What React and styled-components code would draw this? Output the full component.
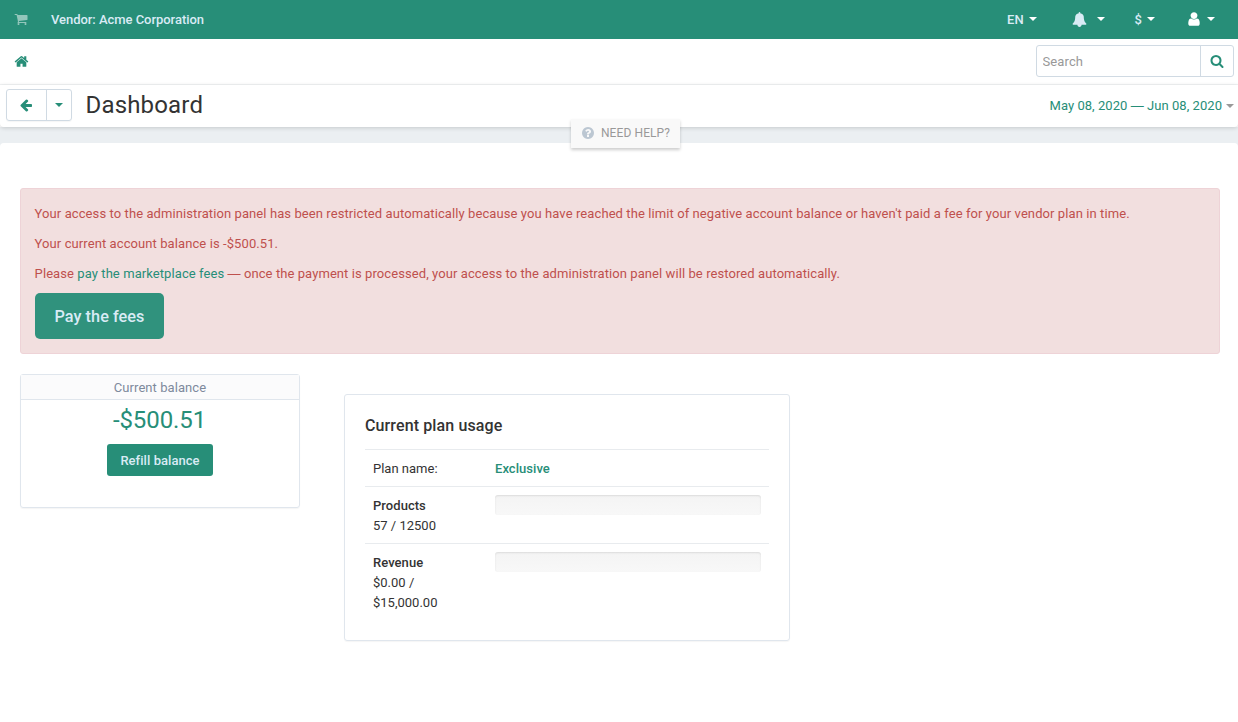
import React from 'react';
import styled, { createGlobalStyle } from 'styled-components';

const green = '#278e78';

const GlobalStyle = createGlobalStyle`
  *, *::before, *::after { box-sizing: border-box; }
  body {
    margin: 0;
    background: #fff;
    color: #333;
    font: 13px/20px Roboto, "Liberation Sans", sans-serif;
    overflow: hidden;
  }
  h1, h4, p { margin: 0; }
  a { color: ${green}; text-decoration: none; }
  button, input { font: inherit; letter-spacing: inherit; }
`;

const paths = {
  cart: 'M704 1536q0 52-38 90t-90 38-90-38-38-90 38-90 90-38 90 38 38 90zm896 0q0 52-38 90t-90 38-90-38-38-90 38-90 90-38 90 38 38 90zm128-1088v512q0 24-16.5 42.5t-40.5 21.5l-1044 122q13 60 13 70 0 16-24 64h920q26 0 45 19t19 45-19 45-45 19h-1024q-26 0-45-19t-19-45q0-11 8-31.5t16-36 21.5-40 15.5-29.5l-177-823h-204q-26 0-45-19t-19-45 19-45 45-19h256q16 0 28.5 6.5t19.5 15.5 13 24.5 8 26 5.5 29.5 4.5 26h1201q26 0 45 19t19 45z',
  bell: 'M1728 1408q0 52-38 90t-90 38h-448q0 106-75 181t-181 75-181-75-75-181h-448q-52 0-90-38t-38-90q50-42 91-88t85-119.5 74.5-158.5 50-206 19.5-260q0-152 117-282.5t307-158.5q-8-19-8-39 0-40 28-68t68-28 68 28 28 68q0 20-8 39 190 28 307 158.5t117 282.5q0 139 19.5 260t50 206 74.5 158.5 85 119.5 91 88z',
  user: 'M1536 1399q0 109-62.5 187t-150.5 78h-854q-88 0-150.5-78t-62.5-187q0-85 8.5-160.5t31.5-152 58.5-131 94-89 134.5-34.5q131 128 313 128t313-128q76 0 134.5 34.5t94 89 58.5 131 31.5 152 8.5 160.5zm-256-887q0 159-112.5 271.5t-271.5 112.5-271.5-112.5-112.5-271.5 112.5-271.5 271.5-112.5 271.5 112.5 112.5 271.5z',
  home: 'M1472 992v480q0 26-19 45t-45 19h-384v-384h-256v384h-384q-26 0-45-19t-19-45v-480q0-1 .5-3t.5-3l575-474 575 474q1 2 1 6zm223-69l-62 74q-8 9-21 11h-3q-13 0-21-7l-692-577-692 577q-12 8-24 7-13-2-21-11l-62-74q-8-10-7-23.5t11-21.5l719-599q32-26 76-26t76 26l244 204v-195q0-14 9-23t23-9h192q14 0 23 9t9 23v408l219 182q10 8 11 21.5t-7 23.5z',
  search: 'M1216 832q0-185-131.5-316.5t-316.5-131.5-316.5 131.5-131.5 316.5 131.5 316.5 316.5 131.5 316.5-131.5 131.5-316.5zm512 832q0 52-38 90t-90 38q-54 0-90-38l-343-342q-179 124-399 124-143 0-273.5-55.5t-225-150-150-225-55.5-273.5 55.5-273.5 150-225 225-150 273.5-55.5 273.5 55.5 225 150 150 225 55.5 273.5q0 220-124 399l343 343q37 37 37 90z',
  back: 'M1664 896v128q0 53-32.5 90.5t-84.5 37.5h-704l293 294q38 36 38 90t-38 90l-75 76q-37 37-90 37-52 0-91-37l-651-652q-37-37-37-90 0-52 37-91l651-650q38-38 91-38 52 0 90 38l75 74q38 38 38 91t-38 91l-293 293h704q52 0 84.5 37.5t32.5 90.5z',
  help: 'M1024 1376v-192q0-14-9-23t-23-9h-192q-14 0-23 9t-9 23v192q0 14 9 23t23 9h192q14 0 23-9t9-23zm256-672q0-88-55.5-163t-138.5-116-170-41q-243 0-371 213-15 24 8 42l132 100q7 6 19 6 16 0 25-12 53-68 86-92 34-24 86-24 48 0 85.5 26t37.5 59q0 38-20 61t-68 45q-63 28-115.5 86.5t-52.5 125.5v36q0 14 9 23t23 9h192q14 0 23-9t9-23q0-19 21.5-49.5t54.5-49.5q32-18 49-28.5t46-35 44.5-48 28-60.5 12.5-81zm384 192q0 209-103 385.5t-279.5 279.5-385.5 103-385.5-103-279.5-279.5-103-385.5 103-385.5 279.5-279.5 385.5-103 385.5 103 279.5 279.5 103 385.5z',
};

const Glyph = styled.svg`
  display: block;
  flex: none;
  width: ${(p) => p.$size}px;
  height: ${(p) => p.$size}px;
  fill: currentColor;
`;

const Icon = ({ name, size = 14 }) => (
  <Glyph $size={size} viewBox="0 0 1792 1792" aria-hidden="true">
    <path d={paths[name]} />
  </Glyph>
);

const Caret = styled.span`
  flex: none;
  border: 4px solid transparent;
  border-top-color: ${(p) => p.$color || green};
  border-bottom: 0;
`;

const Dash = styled.span`
  font-family: "Liberation Sans", sans-serif;
  line-height: 1;
`;

const TopBar = styled.header`
  display: flex;
  align-items: center;
  height: 39px;
  padding: 0 23px 0 14px;
  background: ${green};
  color: #d9ebf5;
  font-weight: 500;
`;

const CartLink = styled.span`
  color: #93c6bb;
  margin: 0 23px 1px 0;
`;

const Vendor = styled.span`
  letter-spacing: -0.04px;
`;

const TopMenu = styled.nav`
  display: flex;
  align-items: center;
  margin-left: auto;
`;

const TopItem = styled.span`
  display: flex;
  align-items: center;
  height: 20px;
  gap: ${(p) => p.$gap || 5}px;
  margin-left: ${(p) => p.$left || 0}px;
  color: ${(p) => p.$color || 'inherit'};
  svg, ${Caret} { margin-bottom: 1px; }
`;

const SearchRow = styled.div`
  display: flex;
  align-items: center;
  justify-content: space-between;
  height: 46px;
  padding: 0 4px 1px 14px;
  border-bottom: 1px solid #f2f4f5;
  color: ${green};
`;

const SearchForm = styled.form`
  display: flex;
  width: 198px;
  height: 32px;
  border: 1px solid #d0dae3;
  border-radius: 3px;
`;

const SearchInput = styled.input`
  flex: 1;
  min-width: 0;
  padding: 1px 6px 0 5.5px;
  border: 0;
  background: none;
  outline: 0;
  letter-spacing: 0.12px;
  &::placeholder { color: #999; opacity: 1; }
`;

const SearchButton = styled.button`
  display: flex;
  align-items: center;
  justify-content: center;
  width: 33px;
  padding: 0;
  border: 0;
  border-left: 1px solid #d0dae3;
  background: none;
  color: ${green};
`;

const TitleRow = styled.div`
  position: relative;
  z-index: 1;
  display: flex;
  align-items: center;
  height: 42px;
  padding: 0 4px 2px 6px;
  background: #fff;
  border-radius: 0 0 4px 4px;
  box-shadow: 0 1px 4px rgba(0, 0, 0, 0.16);
`;

const BackGroup = styled.div`
  display: flex;
  width: 66px;
  height: 32px;
  border: 1px solid #d0dae3;
  border-radius: 3px;
  box-shadow: 0 1px 1px rgba(0, 0, 0, 0.04);
`;

const BackButton = styled.button`
  display: flex;
  align-items: center;
  justify-content: center;
  width: ${(p) => p.$width}px;
  padding: 0 ${(p) => p.$nudge || 0}px 0 0;
  border: 0;
  background: none;
  color: ${green};
  & + & { border-left: 1px solid #d0dae3; }
`;

const Title = styled.h1`
  margin-left: 13.5px;
  font-size: 24px;
  line-height: 32px;
  font-weight: 400;
  letter-spacing: 0.17px;
`;

const DateRange = styled.a`
  display: flex;
  align-items: center;
  gap: 4px;
  margin-left: auto;
  padding-top: 2px;
  letter-spacing: 0.05px;
`;

const HelpTab = styled.a`
  position: absolute;
  top: 34px;
  left: 571px;
  display: flex;
  align-items: center;
  justify-content: center;
  gap: 6px;
  width: 109px;
  height: 29px;
  padding-bottom: 1px;
  background: #f9f9f9;
  color: #999;
  font-size: 12px;
  letter-spacing: 0.1px;
  box-shadow: 0 2px 3px rgba(0, 0, 0, 0.2);
  svg { color: #bcc7d2; margin-bottom: 1px; }
`;

const Backdrop = styled.div`
  padding-top: 16px;
  background: #ebeff2;
`;

const Content = styled.main`
  min-height: 579px;
  padding: 45px 18px 0 20px;
  background: #fff;
  border-radius: 4px 4px 0 0;
`;

const Alert = styled.section`
  height: 166px;
  padding: 15px 14px;
  background: #f2dfdf;
  border: 1px solid #eed3d7;
  border-radius: 3px;
  color: #bf504d;
  p {
    margin: 0 0 10px -0.4px;
    letter-spacing: 0.09px;
  }
  p:last-of-type {
    margin-bottom: 9px;
    letter-spacing: 0.08px;
  }
`;

const PrimaryButton = styled.button`
  display: block;
  width: ${(p) => (p.$large ? 129 : 106)}px;
  height: ${(p) => (p.$large ? 46 : 32)}px;
  padding: 1px 0 0;
  border: 0;
  border-radius: ${(p) => (p.$large ? 5 : 3)}px;
  background: ${(p) => (p.$large ? '#30927d' : green)};
  color: #d9ebf5;
  font-size: ${(p) => (p.$large ? 16.25 : 13)}px;
  font-weight: 500;
  letter-spacing: 0.05px;
`;

const Panels = styled.div`
  display: flex;
  align-items: flex-start;
  gap: 44px;
  margin-top: 20px;
`;

const Card = styled.section`
  border: 1px solid #e0e6ed;
  border-radius: 3px;
  box-shadow: 0 1px 1px rgba(0, 0, 0, 0.04);
`;

const BalanceCard = styled(Card)`
  display: flex;
  flex-direction: column;
  align-items: center;
  width: 280px;
  height: 134px;
`;

const CardHeader = styled.div`
  width: 100%;
  height: 25px;
  line-height: 25px;
  text-align: center;
  letter-spacing: 0.07px;
  background: #fbfbfc;
  border-bottom: 1px solid #e0e6ed;
  color: #7e8a9c;
`;

const Amount = styled.div`
  margin: 5px 1px 9px 0;
  line-height: 30px;
  font-size: 24px;
  letter-spacing: -0.1px;
  color: ${green};
`;

const PlanCard = styled(Card)`
  width: 446px;
  height: 247px;
  margin-top: 20px;
  padding: 20px;
`;

const PlanTitle = styled.h4`
  height: 34px;
  padding-top: 1px;
  font-size: 16px;
  line-height: 20px;
  font-weight: 500;
  letter-spacing: 0.12px;
`;

const PlanRow = styled.div`
  display: grid;
  grid-template-columns: 90px 266px;
  column-gap: 32px;
  padding: 9px 8px 7px;
  border-top: 1px solid #e8ebee;
`;

const Strong = styled.div`
  font-weight: 500;
  letter-spacing: 0.05px;
  color: ${(p) => (p.$accent ? green : 'inherit')};
`;

const Meter = styled.div`
  height: 20px;
  margin-top: -1px;
  border-radius: 3px;
  background: linear-gradient(#f4f4f4, #f8f8f8);
  box-shadow: inset 0 1px 2px rgba(0, 0, 0, 0.1);
`;

export default function App() {
  return (
    <>
      <GlobalStyle />
      <TopBar>
        <CartLink><Icon name="cart" /></CartLink>
        <Vendor>Vendor: Acme Corporation</Vendor>
        <TopMenu>
          <TopItem>EN <Caret $color="#fff" /></TopItem>
          <TopItem $left={35} $gap={10}><Icon name="bell" size={15} /><Caret $color="#fff" /></TopItem>
          <TopItem $left={30}>$ <Caret $color="#fff" /></TopItem>
          <TopItem $left={31} $color="#fff"><Icon name="user" size={16} /><Caret $color="#fff" /></TopItem>
        </TopMenu>
      </TopBar>
      <SearchRow>
        <Icon name="home" size={15} />
        <SearchForm>
          <SearchInput placeholder="Search" />
          <SearchButton type="button" aria-label="Search"><Icon name="search" /></SearchButton>
        </SearchForm>
      </SearchRow>
      <TitleRow>
        <BackGroup>
          <BackButton $width={39} $nudge={1} aria-label="Back"><Icon name="back" /></BackButton>
          <BackButton $width={25} aria-label="History"><Caret /></BackButton>
        </BackGroup>
        <Title>Dashboard</Title>
        <DateRange><span>May 08, 2020 <Dash>—</Dash> Jun 08, 2020</span><Caret $color="#999" /></DateRange>
        <HelpTab><Icon name="help" />NEED HELP?</HelpTab>
      </TitleRow>
      <Backdrop>
        <Content>
          <Alert>
            <p>Your access to the administration panel has been restricted automatically because you have reached the limit of negative account balance or haven't paid a fee for your vendor plan in time.</p>
            <p>Your current account balance is -$500.51.</p>
            <p>Please <a>pay the marketplace fees</a> <Dash>—</Dash> once the payment is processed, your access to the administration panel will be restored automatically.</p>
            <PrimaryButton $large>Pay the fees</PrimaryButton>
          </Alert>
          <Panels>
            <BalanceCard>
              <CardHeader>Current balance</CardHeader>
              <Amount>-$500.51</Amount>
              <PrimaryButton>Refill balance</PrimaryButton>
            </BalanceCard>
            <PlanCard>
              <PlanTitle>Current plan usage</PlanTitle>
              <PlanRow>
                <div>Plan name:</div>
                <Strong $accent>Exclusive</Strong>
              </PlanRow>
              <PlanRow>
                <div><Strong>Products</Strong>57 / 12500</div>
                <Meter />
              </PlanRow>
              <PlanRow>
                <div><Strong>Revenue</Strong>$0.00 / $15,000.00</div>
                <Meter />
              </PlanRow>
            </PlanCard>
          </Panels>
        </Content>
      </Backdrop>
    </>
  );
}
